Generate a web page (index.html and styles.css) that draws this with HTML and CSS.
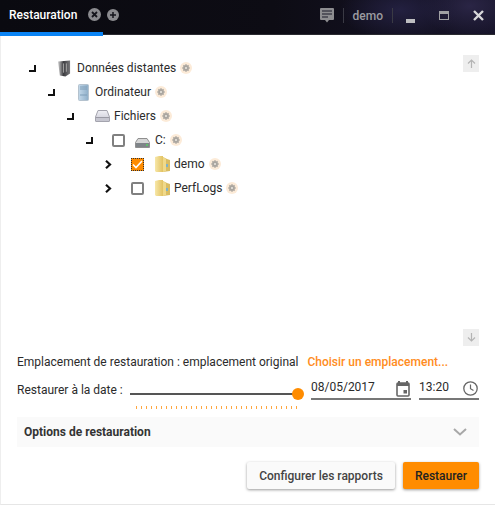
FILE: index.html
```html
<!DOCTYPE html>
<html lang="fr">
<head>
<meta charset="utf-8">
<title>Restauration</title>
<link rel="stylesheet" href="styles.css">
</head>
<body>
<svg class="defs" width="0" height="0">
  <defs>
    <linearGradient id="fold" x1="0" x2="1"><stop offset="0" stop-color="#f7e7a8"/><stop offset="1" stop-color="#e2c262"/></linearGradient>
    <linearGradient id="srv" x1="0" x2="1"><stop offset="0" stop-color="#d0d0d0"/><stop offset=".45" stop-color="#3c3c40"/><stop offset="1" stop-color="#77777a"/></linearGradient>
    <linearGradient id="pc" x1="0" x2="1"><stop offset="0" stop-color="#c4d9ea"/><stop offset="1" stop-color="#8eaec8"/></linearGradient>
    <linearGradient id="disk" x1="0" x2="0" y1="0" y2="1"><stop offset="0" stop-color="#f0f0f5"/><stop offset="1" stop-color="#c8c8d4"/></linearGradient>
    <symbol id="folder" viewBox="0 0 15 16"><path d="M0 1l4-1h4v16H1l-1-1z" fill="url(#fold)"/><path d="M8 1l4 2 3 1v11l-7 1z" fill="#d9bc62"/><path d="M8 1l3 2v12l-3 1z" fill="#f0d98a"/><rect x="11" y="8" width="2" height="3" fill="#7fb2c8"/></symbol>
    <symbol id="gear" viewBox="0 0 12 12"><circle cx="6" cy="6" r="6" fill="#fcebd8"/><path d="M6 2.300v7.400M2.300 6h7.400M3.400 3.400l5.200 5.200M8.600 3.400l-5.200 5.200" stroke="#aaa6a0" stroke-width="1.500"/><circle cx="6" cy="6" r="2.700" fill="#aaa6a0"/><circle cx="6" cy="6" r="1" fill="#ece8e2"/></symbol>
    <symbol id="corner" viewBox="0 0 7 7"><path d="M6 0v6H0" fill="none" stroke="#111" stroke-width="2"/></symbol>
    <symbol id="chevron" viewBox="0 0 7 9"><path d="M1 .8l4 3.700-4 3.700" fill="none" stroke="#111" stroke-width="2.200"/></symbol>
  </defs>
</svg>
<div class="window">
  <header class="topbar">
    <div class="tab">
      <span class="tab-title">Restauration</span>
      <svg class="tab-icon" width="13" height="13" viewBox="0 0 13 13"><circle cx="6.500" cy="6.500" r="6.500" fill="#8b8b8f"/><path d="M4 4l5 5M9 4l-5 5" stroke="#15151c" stroke-width="1.800"/></svg>
      <svg class="tab-icon" width="12" height="12" viewBox="0 0 12 12"><circle cx="6" cy="6" r="6" fill="#8b8b8f"/><path d="M6 3v6M3 6h6" stroke="#15151c" stroke-width="1.500"/></svg>
    </div>
    <div class="tools">
      <svg width="14" height="15" viewBox="0 0 14 15"><path d="M1 0h12a1 1 0 0 1 1 1v10a1 1 0 0 1-1 1H9l-2 2.500L5 12H1a1 1 0 0 1-1-1V1a1 1 0 0 1 1-1z" fill="#8d8d90"/><path d="M2 3h10M2 6h10M2 9h6" stroke="#1b1a28" stroke-width="1.200"/></svg>
      <span class="sep"></span>
      <span class="user">demo</span>
      <span class="sep"></span>
      <span class="win-btn win-min"></span>
      <span class="win-btn win-max"></span>
      <svg class="win-close" width="11" height="11" viewBox="0 0 11 11"><path d="M1 1l9 9M10 1l-9 9" stroke="#d8d8da" stroke-width="2.400"/></svg>
    </div>
  </header>

  <main class="content">
    <section class="tree-panel">
      <ul class="tree">
        <li class="row lvl0">
          <svg class="conn" width="7" height="7"><use href="#corner"/></svg>
          <svg class="icon icon-server" width="13" height="17" viewBox="0 0 14 17"><path d="M0 1l13-1v14l-5 3-6-1z" fill="url(#srv)"/><path d="M6 3v10M9 3v9" stroke="#aaa"/></svg>
          <span class="label">Données distantes</span>
          <svg class="gear" width="12" height="12"><use href="#gear"/></svg>
        </li>
        <li class="row lvl1">
          <svg class="conn" width="7" height="7"><use href="#corner"/></svg>
          <svg class="icon icon-pc" width="11" height="17" viewBox="0 0 11 17"><rect x=".5" y=".5" width="10" height="16" rx="1" fill="url(#pc)" stroke="#b4c2ce"/><path d="M2 3h7M2 5h7M2 11h7" stroke="#7e9eb8"/></svg>
          <span class="label">Ordinateur</span>
          <svg class="gear" width="12" height="12"><use href="#gear"/></svg>
        </li>
        <li class="row lvl2">
          <svg class="conn" width="7" height="7"><use href="#corner"/></svg>
          <svg class="icon icon-files" width="15" height="12" viewBox="0 0 15 12"><path d="M3 .5h9L14.500 7v4a.5.5 0 0 1-.5.5H1a.5.5 0 0 1-.5-.5V7z" fill="url(#disk)" stroke="#a4a4ae"/><path d="M1 7.500h13" stroke="#9a9aa4"/><rect x="1" y="8" width="13" height="3" fill="#c6c6d0"/></svg>
          <span class="label">Fichiers</span>
          <svg class="gear" width="12" height="12"><use href="#gear"/></svg>
        </li>
        <li class="row lvl3">
          <svg class="conn" width="7" height="7"><use href="#corner"/></svg>
          <span class="check"></span>
          <svg class="icon icon-drive" width="15" height="10" viewBox="0 0 15 10"><path d="M3 .5h9l2.500 4v5H.5v-5z" fill="#d6d6d6" stroke="#8f8f8f"/><rect x="1" y="5" width="13" height="4" fill="#7f8488"/><rect x="11" y="6" width="2" height="2" fill="#5fbf6a"/></svg>
          <span class="label">C:</span>
          <svg class="gear" width="12" height="12"><use href="#gear"/></svg>
        </li>
        <li class="row lvl4">
          <svg class="chev" width="7" height="9"><use href="#chevron"/></svg>
          <span class="check check-on"><svg width="11" height="9" viewBox="0 0 11 9"><path d="M1 4.500l3 3 6-6.500" fill="none" stroke="#fff" stroke-width="1.600"/></svg></span>
          <svg class="icon" width="15" height="16"><use href="#folder"/></svg>
          <span class="label">demo</span>
          <svg class="gear" width="12" height="12"><use href="#gear"/></svg>
        </li>
        <li class="row lvl4">
          <svg class="chev" width="7" height="9"><use href="#chevron"/></svg>
          <span class="check"></span>
          <svg class="icon" width="15" height="16"><use href="#folder"/></svg>
          <span class="label">PerfLogs</span>
          <svg class="gear" width="12" height="12"><use href="#gear"/></svg>
        </li>
      </ul>
      <div class="scroll-col">
        <span class="scroll-btn"><svg width="9" height="9" viewBox="0 0 9 9"><path d="M4.500 9V1M1 4.500L4.500 1 8 4.500" fill="none" stroke="#b4b4b4" stroke-width="1.200"/></svg></span>
        <span class="scroll-btn"><svg width="9" height="9" viewBox="0 0 9 9"><path d="M4.500 0v8M1 4.500L4.500 8 8 4.500" fill="none" stroke="#b4b4b4" stroke-width="1.200"/></svg></span>
      </div>
    </section>

    <div class="location">
      <span>Emplacement de restauration : emplacement original</span>
      <a class="link">Choisir un emplacement...</a>
    </div>

    <div class="date-row">
      <span class="date-label">Restaurer à la date :</span>
      <div class="slider">
        <div class="track"><span class="thumb"></span></div>
        <div class="ticks"></div>
      </div>
      <div class="field field-date">
        <span>08/05/2017</span>
        <svg width="14" height="16" viewBox="0 0 14 16"><path d="M3 0v2M11 0v2" stroke="#666" stroke-width="2"/><rect x="1" y="2" width="12" height="13" rx="1" fill="none" stroke="#666" stroke-width="1.600"/><rect x="1" y="2" width="12" height="3" fill="#666"/><rect x="7.500" y="9" width="3.500" height="3.500" fill="#666"/></svg>
      </div>
      <div class="field field-time">
        <span>13:20</span>
        <svg width="15" height="15" viewBox="0 0 15 15"><circle cx="7.500" cy="7.500" r="6.700" fill="none" stroke="#666" stroke-width="1.300"/><path d="M7.500 3.500v4.200l3 1.800" fill="none" stroke="#666" stroke-width="1.200"/></svg>
      </div>
    </div>

    <div class="options">
      <span>Options de restauration</span>
      <svg width="14" height="8" viewBox="0 0 14 8"><path d="M1 1l6 5.500L13 1" fill="none" stroke="#a8a8a8" stroke-width="2"/></svg>
    </div>

    <div class="actions">
      <button class="btn btn-light">Configurer les rapports</button>
      <button class="btn btn-primary">Restaurer</button>
    </div>
  </main>
</div>
</body>
</html>
```

FILE: styles.css
```css
* { box-sizing: border-box; }
html, body { margin: 0; padding: 0; height: 100%; }
body {
  font-family: Roboto, "Liberation Sans", sans-serif;
  font-size: 12px;
  color: #2b2b2b;
  background: #fff;
}
.defs { position: absolute; }
.window {
  width: 495px;
  height: 505px;
  display: flex;
  flex-direction: column;
  border-left: 1px solid #eee;
  border-bottom: 1px solid #e6e6e6;
}
.topbar {
  height: 35px;
  flex: none;
  display: flex;
  justify-content: space-between;
  margin-left: -1px;
  background:
    radial-gradient(ellipse 60px 30px at 400px 10px, #232040, transparent),
    radial-gradient(ellipse 50px 30px at 470px 6px, #2a2545, transparent),
    linear-gradient(90deg, #0a0a10 0%, #0d0c14 55%, #17142a 100%);
  border-bottom: 1px solid #2a2a30;
}
.tab {
  width: 103px;
  height: 36px;
  flex: none;
  display: flex;
  align-items: center;
  padding: 0 0 3px 9px;
  border-bottom: 4px solid #0a84f5;
  white-space: nowrap;
}
.tab-title { color: #fff; font-weight: 500; font-size: 12px; margin-right: 11px; }
.tab-icon { flex: none; margin-right: 6px; }
.tools {
  display: flex;
  align-items: center;
  padding: 0 11px 3px 0;
  color: #9a9a9e;
}
.sep { width: 1px; height: 15px; background: #3a3a44; margin: 0 9px; }
.user { font-weight: 500; font-size: 12px; color: #9b9ba0; }
.win-btn { display: block; flex: none; }
.win-min { width: 9px; height: 4px; background: #bdbdc0; margin: 10px 24px 0 4px; }
.win-max { width: 10px; height: 9px; border: 1px solid #a0a0a4; border-top-width: 3px; margin-right: 24px; }
.win-close { flex: none; }

.content {
  flex: 1;
  min-height: 0;
  display: flex;
  flex-direction: column;
  padding: 0 16px 14px 16px;
}
.tree-panel {
  height: 311px;
  flex: none;
  display: flex;
  justify-content: space-between;
  padding: 21px 0 0 0;
}
.tree { list-style: none; margin: 0; padding: 0; }
.row { height: 24px; display: flex; align-items: center; }
.lvl0 { padding-left: 12px; }
.lvl1 { padding-left: 31px; }
.lvl2 { padding-left: 50px; }
.lvl3 { padding-left: 69px; }
.lvl4 { padding-left: 88px; }
.conn { flex: none; }
.lvl0 .conn { margin-right: 22px; }
.lvl1 .conn { margin-right: 23px; }
.lvl2 .conn { margin-right: 21px; }
.lvl3 .conn { margin-right: 19px; }
.chev { flex: none; margin-right: 19px; }
.icon { flex: none; margin-right: 6px; }
.lvl2 .icon { margin-right: 4px; }
.lvl3 .icon { margin: 5px 5px 0 10px; }
.lvl4 .icon { margin: 0 4px 0 11px; }
.check {
  width: 13px;
  height: 13px;
  flex: none;
  border: 2px solid #808080;
  border-radius: 2px;
  display: flex;
  align-items: center;
  justify-content: center;
}
.check-on { background: #ff8c00; border: 1px dotted #333; border-radius: 0; }
.label { color: #2b2b2b; }
.gear { flex: none; margin-left: 4px; }
.scroll-col {
  width: 16px;
  flex: none;
  margin-top: -1px;
  display: flex;
  flex-direction: column;
  justify-content: space-between;
}
.scroll-btn {
  width: 16px;
  height: 17px;
  background: #eee;
  display: flex;
  align-items: center;
  justify-content: center;
}
.location {
  height: 20px;
  flex: none;
  margin-top: 6px;
  display: flex;
  align-items: center;
  gap: 9px;
  white-space: nowrap;
}
.link { color: #ff8c22; font-weight: 500; }
.date-row {
  height: 35px;
  flex: none;
  margin-top: 10px;
  display: flex;
  align-items: flex-start;
}
.date-label { width: 113px; flex: none; line-height: 16px; white-space: nowrap; }
.slider { width: 174px; flex: none; margin-right: 7px; }
.track { height: 2px; margin-top: 11px; background: #555; position: relative; width: 168px; }
.thumb {
  position: absolute;
  right: -6px;
  top: -5px;
  width: 12px;
  height: 12px;
  border-radius: 50%;
  background: #ff8c00;
}
.ticks {
  height: 3px;
  margin: 11px 0 0 6px;
  width: 163px;
  background: repeating-linear-gradient(90deg, #ffa640 0 1px, transparent 1px 5px);
}
.field {
  height: 24px;
  flex: none;
  margin-top: -6px;
  border-bottom: 2px solid #777;
  display: flex;
  justify-content: space-between;
  align-items: center;
  padding-right: 1px;
}
.field svg { flex: none; margin-top: 3px; }
.field-date { width: 100px; margin-right: 8px; }
.field-time { width: 60px; }
.options {
  height: 30px;
  flex: none;
  padding: 0 12px 0 7px;
  background: #fafafa;
  display: flex;
  justify-content: space-between;
  align-items: center;
  font-size: 12px;
  font-weight: 700;
  color: #333;
}
.actions {
  flex: none;
  margin-top: 15px;
  display: flex;
  justify-content: flex-end;
  gap: 8px;
}
.btn {
  height: 27px;
  border: 0;
  border-radius: 2px;
  font-family: Roboto, "Liberation Sans", sans-serif;
  font-size: 12px;
  font-weight: 500;
  padding: 0;
  box-shadow: 0 1px 3px rgba(0, 0, 0, .4);
}
.btn-light { width: 148px; background: #fafafa; color: #444; }
.btn-primary { width: 76px; background: #ff8c00; color: #222; }
```
